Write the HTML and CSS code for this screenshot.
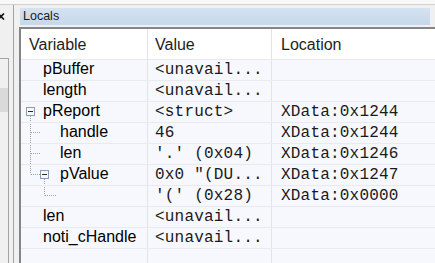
FILE: index.html
```html
<!DOCTYPE html>
<html lang="en">
  <head>
    <meta charset="UTF-8" />
    <title>Locals</title>
    <link rel="stylesheet" href="styles.css">
  </head>
  <body>
    <div class="top-strip"></div>
    <div class="main">
      <!-- === LEFT DOCK (cut off) === -->
      <aside class="side">
        <div class="side-in">
          <svg class="close" width="5" height="7" viewBox="0 0 5 7"><path d="M-2 0.5L4 6.5M4 0.5L-2 6.5"/></svg>
          <div class="side-frame"><div class="side-sel"></div></div>
        </div>
      </aside>

      <!-- === LOCALS PANE === -->
      <section class="pane">
        <div class="title">Locals</div>
        <div class="list">
          <div class="row head">
            <div class="c-name"><span>Variable</span></div>
            <div class="c-val">Value</div>
            <div class="c-loc">Location</div>
          </div>
          <div class="row">
            <div class="c-name"><span class="ind"></span><span>pBuffer</span></div>
            <div class="c-val mono">&lt;unavail...</div>
            <div class="c-loc mono"></div>
          </div>
          <div class="row">
            <div class="c-name"><span class="ind"></span><span>length</span></div>
            <div class="c-val mono">&lt;unavail...</div>
            <div class="c-loc mono"></div>
          </div>
          <div class="row">
            <div class="c-name">
              <svg class="tree" width="21" height="21" viewBox="0 0 21 21">
                <rect class="box" x="4.5" y="6.5" width="8" height="8"/>
                <path class="minus" d="M6 10.5h5"/>
                <path class="dot" d="M8.5 15v6"/>
              </svg>
              <span>pReport</span>
            </div>
            <div class="c-val mono">&lt;struct&gt;</div>
            <div class="c-loc mono">XData:0x1244</div>
          </div>
          <div class="row">
            <div class="c-name">
              <svg class="tree" width="38" height="21" viewBox="0 0 38 21">
                <path class="dot" d="M8.5 0v21M9 10.5h9"/>
              </svg>
              <span>handle</span>
            </div>
            <div class="c-val mono">46</div>
            <div class="c-loc mono">XData:0x1244</div>
          </div>
          <div class="row">
            <div class="c-name">
              <svg class="tree" width="38" height="21" viewBox="0 0 38 21">
                <path class="dot" d="M8.5 0v21M9 10.5h9"/>
              </svg>
              <span>len</span>
            </div>
            <div class="c-val mono">'.' (0x04)</div>
            <div class="c-loc mono">XData:0x1246</div>
          </div>
          <div class="row">
            <div class="c-name">
              <svg class="tree" width="38" height="21" viewBox="0 0 38 21">
                <path class="dot" d="M8.5 0v10.5M9 10.5h9M22.5 15v6"/>
                <rect class="box" x="18.5" y="6.5" width="8" height="8"/>
                <path class="minus" d="M20 10.5h5"/>
              </svg>
              <span>pValue</span>
            </div>
            <div class="c-val mono">0x0 "(DU...</div>
            <div class="c-loc mono">XData:0x1247</div>
          </div>
          <div class="row">
            <div class="c-name">
              <svg class="tree" width="38" height="21" viewBox="0 0 38 21">
                <path class="dot" d="M22.5 0v10.5M23 10.5h12"/>
              </svg>
            </div>
            <div class="c-val mono">'(' (0x28)</div>
            <div class="c-loc mono">XData:0x0000</div>
          </div>
          <div class="row">
            <div class="c-name"><span class="ind"></span><span>len</span></div>
            <div class="c-val mono">&lt;unavail...</div>
            <div class="c-loc mono"></div>
          </div>
          <div class="row">
            <div class="c-name"><span class="ind"></span><span>noti_cHandle</span></div>
            <div class="c-val mono">&lt;unavail...</div>
            <div class="c-loc mono"></div>
          </div>
          <div class="row">
            <div class="c-name"></div>
            <div class="c-val"></div>
            <div class="c-loc"></div>
          </div>
        </div>
      </section>
    </div>
  </body>
</html>
```

FILE: styles.css
```css
:root{
  --c-panel:#f0f0f0;
  --c-rows:#f7f8fd;
  --c-line:#e9eaef;
  --c-sep:#e4e4e4;
  --c-border:#858585;
}
*{box-sizing:border-box}
body{margin:0;width:435px;height:263px;overflow:hidden;background:var(--c-panel);font-family:"Liberation Sans",Arial,sans-serif;color:#000}

.top-strip{height:5px;background:#f8f8f8;border-bottom:1px solid #d2d2d2}
.main{display:flex;height:258px}

/* ===== LEFT DOCK ===== */
.side{width:19px;flex:none;display:flex}
.side-in{width:14px;border-right:1px solid #a3a3a3;display:flex;flex-direction:column}
.close{display:block;margin-top:8px;stroke:#111;stroke-width:1.6;fill:none}
.side-frame{margin-top:38px;width:9px;flex:1;border-top:1px solid #a3a3a3;border-right:1px solid #a3a3a3}
.side-sel{margin-top:29px;height:24px;background:#dadada}

/* ===== PANE ===== */
.pane{flex:1;min-width:0;display:flex;flex-direction:column;padding-top:3px}
.title{height:17px;margin:0 5px 2px 1px;padding-left:3px;background:linear-gradient(#d4e2f1,#c6d8ec);font-size:12.5px;line-height:17px;color:#1a1a1a}
.list{flex:1;border-top:2px solid var(--c-border);border-left:2px solid var(--c-border);background:var(--c-rows)}

.row{display:grid;grid-template-columns:127px 124px 1fr;height:21px;border-top:1px solid var(--c-line)}
.row>div{border-right:1px solid var(--c-sep);white-space:nowrap;overflow:hidden;font-size:16px;line-height:18px;padding-bottom:2px}
.row>.c-loc{border-right:none}
.c-name{display:flex;align-items:flex-start;padding-left:1px}
.c-val{padding-left:7px}
.c-loc{padding-left:9px}
.row>.mono{font-family:"Liberation Mono","Courier New",monospace;padding-top:1px;padding-bottom:1px;letter-spacing:.2px;color:#1a1a1a}

.head{height:30px;border-top:none;background:#fff}
.head>div{line-height:28px;padding-top:2px;padding-bottom:0;color:#1e1e1e}
.head>.c-name{padding-left:8px}

/* tree glyphs */
.ind{width:21px;flex:none}
.tree{flex:none;margin-top:-1px}
.tree .dot{stroke:#a0a0a0;stroke-width:1;stroke-dasharray:1 1;fill:none}
.tree .box{fill:#f6f7f9;stroke:#8a9bb3;stroke-width:1}
.tree .minus{stroke:#2b2b2b;stroke-width:1}
```
